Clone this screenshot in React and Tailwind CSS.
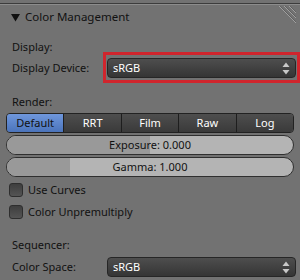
import React from "react";

const font = { fontFamily: '"Noto Sans", "DejaVu Sans", sans-serif' };

function Arrows() {
  return (
    <svg width="8" height="13" viewBox="0 0 8 13" className="shrink-0">
      <path d="M4 0.5 L7.5 5 L0.5 5 Z" fill="#c8c8c8" />
      <path d="M4 12.5 L7.5 8 L0.5 8 Z" fill="#c8c8c8" />
    </svg>
  );
}

function Dropdown({ children }) {
  return (
    <div className="flex-1 h-[20px] flex items-center justify-between pl-[5px] pr-[5px] rounded-[4px] border border-[#262626] bg-gradient-to-b from-[#4e4e4e] to-[#353535] text-white text-[11px]">
      <span>{children}</span>
      <Arrows />
    </div>
  );
}

function Checkbox({ label }) {
  return (
    <div className="flex items-center h-[16px] pl-[9px] gap-[5px] text-[11px] text-[#111]">
      <div className="w-[14px] h-[14px] shrink-0 rounded-[3px] border border-[#2e2e2e] bg-gradient-to-b from-[#3e3e3e] to-[#545454]" />
      <span>{label}</span>
    </div>
  );
}

function Slider({ label, fill }) {
  return (
    <div className="relative h-[20px] mx-[6px] rounded-full border border-[#2f2f2f] bg-[#b4b4b4] overflow-hidden">
      <div className="h-full bg-[#999999]" style={{ width: fill }} />
      <div className="absolute inset-0 flex items-center justify-center text-[11px] text-[#111]">
        {label}
      </div>
    </div>
  );
}

export default function App() {
  const tabs = ["Default", "RRT", "Film", "Raw", "Log"];
  return (
    <div className="w-[300px] h-[280px] bg-[#727272] overflow-hidden flex flex-col" style={font}>
      <div className="h-[3px]" />
      <div className="h-px bg-[#3c3c3c]" />
      <div className="h-px bg-[#8c8c8c]" />
      <div className="relative h-[24px] flex items-center pl-[11px] gap-[5px] text-[11.5px] text-[#111]">
        <svg width="9" height="9" viewBox="0 0 9 9" className="shrink-0">
          <path d="M0 1 L9 1 L4.5 8.5 Z" fill="#111" />
        </svg>
        <span>Color Management</span>
        <svg width="18" height="19" viewBox="0 0 18 19" className="absolute right-[4px] top-[0px]">
          <path d="M1 1 L18 18 M6 1 L18 13 M11 1 L18 8" stroke="#a0a0a0" strokeWidth="1" />
          <path d="M2 1 L18 17 M7 1 L18 12 M12 1 L18 7" stroke="#5a5a5a" strokeWidth="0.8" />
        </svg>
      </div>
      <div className="h-[9px]" />
      <div className="h-[18px] flex items-center pl-[12px] text-[11px] text-[#111]">Display:</div>
      <div className="h-[2px]" />
      <div className="h-[20px] flex items-center pl-[12px] pr-[4px] text-[11px] text-[#111]">
        <span className="w-[95px] shrink-0">Display Device:</span>
        <div className="relative flex-1 flex">
          <Dropdown>sRGB</Dropdown>
          <span className="absolute left-[-4px] right-[-4px] top-[-6px] bottom-[-5px] border-[3px] border-[#d0252d] pointer-events-none" />
        </div>
      </div>
      <div className="h-[15px]" />
      <div className="h-[18px] flex items-center pl-[12px] text-[11px] text-[#111]">Render:</div>
      <div className="h-[2px]" />
      <div className="h-[20px] mx-[6px] flex rounded-[4px] border border-[#222] overflow-hidden text-[11px]">
        {tabs.map((t, i) => (
          <div
            key={t}
            className={
              "flex-1 flex items-center justify-center " +
              (i > 0 ? "border-l border-[#1e1e1e] " : "") +
              (i === 0
                ? "bg-gradient-to-b from-[#6f97dc] to-[#4b74bb] text-[#111]"
                : "bg-gradient-to-b from-[#4e4e4e] to-[#3a3a3a] text-white")
            }
          >
            {t}
          </div>
        ))}
      </div>
      <div className="h-[2px]" />
      <Slider label="Exposure: 0.000" fill="50%" />
      <div className="h-[2px]" />
      <Slider label="Gamma: 1.000" fill="22%" />
      <div className="h-[5px]" />
      <Checkbox label="Use Curves" />
      <div className="h-[6px]" />
      <Checkbox label="Color Unpremultiply" />
      <div className="h-[16px]" />
      <div className="h-[18px] flex items-center pl-[12px] text-[11px] text-[#111]">Sequencer:</div>
      <div className="h-[3px]" />
      <div className="h-[20px] flex items-center pl-[12px] pr-[4px] text-[11px] text-[#111]">
        <span className="w-[95px] shrink-0">Color Space:</span>
        <div className="flex-1 flex">
          <Dropdown>sRGB</Dropdown>
        </div>
      </div>
    </div>
  );
}
